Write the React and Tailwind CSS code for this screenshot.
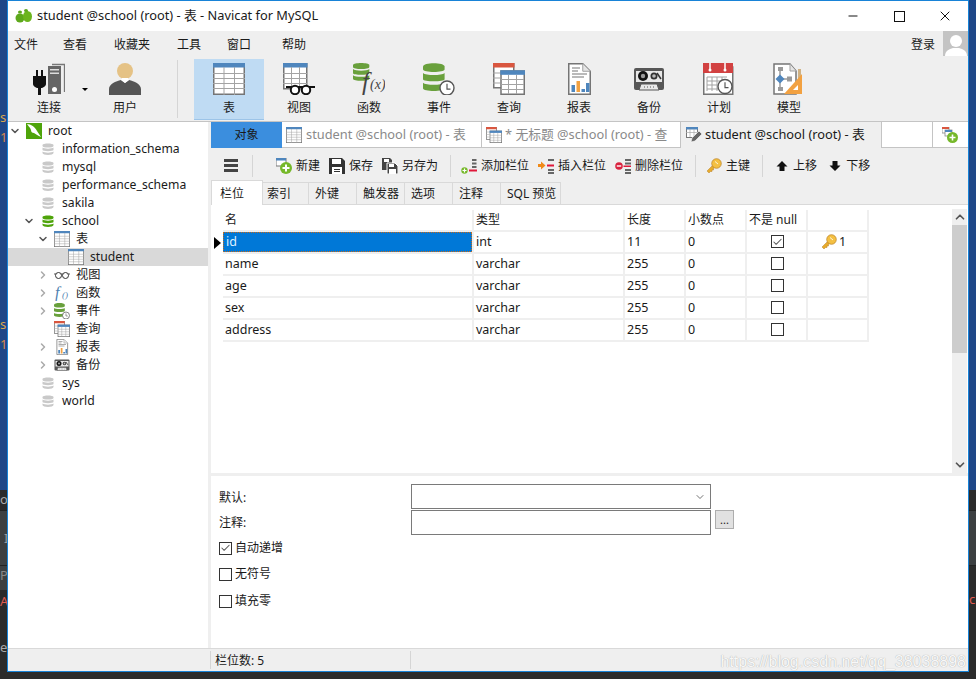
import { Minus, X, ChevronDown, ChevronRight, ChevronUp, Check } from 'lucide-react';

const font = "[font-family:'Noto_Sans','Noto_Sans_CJK_SC',sans-serif]";

function TableIcon({ className, head = '#4f86bd' }) {
  return (
    <svg viewBox="0 0 32 32" className={className}>
      <rect x="0.75" y="0.75" width="30.5" height="30.5" fill="#fff" stroke="#757575" strokeWidth="1.5" />
      <rect x="0" y="0" width="32" height="4.5" fill={head} />
      <path d="M0 10.5H32M0 15.5H32M0 20.5H32M0 25.5H32M11 4V32M21.5 4V32" stroke="#a3a3a3" strokeWidth="1" />
    </svg>
  );
}

function Db({ className, color = '#69a03c' }) {
  return (
    <svg viewBox="0 0 24 24" className={className}>
      <path d="M1 4c0-4 22-4 22 0v2c0 4-22 4-22 0z" fill={color} />
      <path d="M1 9c3 3 19 3 22 0v5c0 3-22 3-22 0z" fill={color} />
      <path d="M1 17c3 3 19 3 22 0v3c0 5-22 5-22 0z" fill={color} />
    </svg>
  );
}

function Clock({ cx, cy, r }) {
  return (
    <g>
      <circle cx={cx} cy={cy} r={r} fill="#fff" stroke="#555" strokeWidth={r / 5} />
      <path d={`M${cx} ${cy - r * 0.6}V${cy + r * 0.15}H${cx + r * 0.5}`} fill="none" stroke="#555" strokeWidth={r / 6} />
    </g>
  );
}

function PlugIcon() {
  return (
    <svg viewBox="0 0 32 32" className="h-8 w-8">
      <path d="M3 7h2v6H3zM8 7h2v6H8z" fill="#111" />
      <path d="M0 13h13v8c0 2-3 4-5 4v7H5v-7c-2 0-5-2-5-4z" fill="#111" />
      <path d="M15 3h13v28H15z" fill="#666" />
      <path d="M17 6h9v1.5h-9zM17 9.500h9V11h-9z" fill="#ddd" />
      <circle cx="21.500" cy="26.500" r="2.500" fill="#fff" />
      <path d="M19 1.500h12.500V29" fill="none" stroke="#777" strokeWidth="1.300" />
    </svg>
  );
}

function UserIcon() {
  return (
    <svg viewBox="0 0 32 32" className="h-8 w-8">
      <circle cx="16" cy="8" r="8" fill="#e5c285" />
      <path d="M0 32v-6c0-5 7-8 12-9l4 3 4-3c5 1 12 4 12 9v6z" fill="#555" />
      <path d="M12 17l4 3 4-3-1-2h-6z" fill="#fff" />
    </svg>
  );
}

function ViewIcon({ className = 'h-8 w-8', small }) {
  if (small) {
    return (
      <svg viewBox="0 0 16 16" className={className}>
        <path d="M0 7h16" stroke="#333" strokeWidth="0.800" />
        <circle cx="4.500" cy="8.500" r="3" fill="#fff" stroke="#333" strokeWidth="1" />
        <circle cx="11.500" cy="8.500" r="3" fill="#fff" stroke="#333" strokeWidth="1" />
      </svg>
    );
  }
  return (
    <svg viewBox="0 0 32 32" className={className}>
      <rect x="0.750" y="0.750" width="23" height="25" fill="#fff" stroke="#757575" strokeWidth="1.500" />
      <rect x="0" y="0" width="24.500" height="4.500" fill="#4f86bd" />
      <path d="M0 10.500H24M0 15.500H24M0 20.500H24M8.500 4V26M16.500 4V26" stroke="#a3a3a3" />
      <path d="M3 24h29" stroke="#111" strokeWidth="2" />
      <circle cx="12" cy="27" r="4.200" fill="#fff" stroke="#111" strokeWidth="2" />
      <circle cx="23" cy="27" r="4.200" fill="#fff" stroke="#111" strokeWidth="2" />
    </svg>
  );
}

function FuncIcon() {
  return (
    <svg viewBox="0 0 32 32" className="h-8 w-8">
      <g transform="scale(0.68)">
        <path d="M0 3c0-4 24-4 24 0v3c0 4-24 4-24 0z" fill="#69a03c" />
        <path d="M0 9c3 3 21 3 24 0v6c0 3-24 3-24 0z" fill="#69a03c" />
        <path d="M0 18c3 3 21 3 24 0v5c0 4-24 4-24 0z" fill="#69a03c" />
      </g>
      <text x="9" y="27" fontFamily="Liberation Serif" fontStyle="italic" fontSize="25" fill="#444">f</text>
      <text x="17" y="26" fontFamily="Liberation Serif" fontStyle="italic" fontSize="14" fill="#444">(x)</text>
    </svg>
  );
}

function EventIcon({ className = 'h-8 w-8' }) {
  return (
    <svg viewBox="0 0 32 32" className={className}>
      <g transform="scale(0.9)">
        <path d="M0 4c0-5 24-5 24 0v3c0 4-24 4-24 0z" fill="#69a03c" />
        <path d="M0 11c3 3 21 3 24 0v7c0 3-24 3-24 0z" fill="#69a03c" />
        <path d="M0 22c3 3 21 3 24 0v6c0 4-24 4-24 0z" fill="#69a03c" />
      </g>
      <Clock cx={24} cy={25} r={7} />
    </svg>
  );
}

function QueryIcon({ className = 'h-8 w-8' }) {
  return (
    <svg viewBox="0 0 32 32" className={className}>
      <rect x="0.750" y="0.750" width="20" height="24" fill="#fff" stroke="#757575" strokeWidth="1.500" />
      <rect x="0" y="0" width="21.500" height="4.500" fill="#d9563f" />
      <path d="M0 10H7M0 15H7M0 20H7" stroke="#a3a3a3" />
      <rect x="8" y="8" width="23.250" height="23.250" fill="#fff" stroke="#757575" strokeWidth="1.500" />
      <rect x="7.300" y="7.300" width="24.700" height="4.500" fill="#4f86bd" />
      <path d="M8 16.500H31M8 21.500H31M8 26.500H31M15.500 12V31M23.500 12V31" stroke="#a3a3a3" />
    </svg>
  );
}

function ReportIcon({ className = 'h-8 w-8' }) {
  return (
    <svg viewBox="0 0 32 32" className={className}>
      <path d="M5.750 0.750h14l7.500 7.500v23H5.750z" fill="#fff" stroke="#757575" strokeWidth="1.500" />
      <path d="M19.750 0.750v7.500h7.500" fill="#e5e5e5" stroke="#a0a0a0" />
      <path d="M9 5h8M9 8h6M9 11h15M9 14h12" stroke="#777" strokeWidth="1.200" />
      <rect x="8.500" y="22" width="3.500" height="7" fill="#4f86bd" />
      <rect x="13.500" y="18" width="3.500" height="11" fill="#f2a141" />
      <rect x="18.500" y="26" width="3.500" height="3" fill="#4f86bd" />
      <rect x="23" y="20" width="3.500" height="9" fill="#4f86bd" />
    </svg>
  );
}

function BackupIcon({ className = 'h-8 w-8' }) {
  return (
    <svg viewBox="0 0 32 32" className={className}>
      <rect x="1" y="5" width="30" height="22" rx="2" fill="#575757" />
      <rect x="3" y="8" width="26" height="11" fill="#e8e8e8" />
      <circle cx="10" cy="13" r="5" fill="#111" />
      <circle cx="10" cy="13" r="2.200" fill="#999" />
      <circle cx="21" cy="13" r="3.500" fill="#333" />
      <circle cx="21" cy="13" r="1.800" fill="#bbb" />
      <path d="M24 10l4 6" stroke="#333" strokeWidth="1.500" />
      <path d="M6 27l2-6h16l2 6z" fill="#e8e8e8" stroke="#575757" />
      <path d="M11 24h1M14 24h1M17 24h1M20 24h1" stroke="#555" />
    </svg>
  );
}

function ScheduleIcon() {
  return (
    <svg viewBox="0 0 32 32" className="h-8 w-8">
      <rect x="0.750" y="4" width="29" height="27.250" fill="#fff" stroke="#757575" strokeWidth="1.500" />
      <rect x="0" y="0" width="30" height="10" fill="#d24141" />
      <path d="M7 0v6M22 0v6" stroke="#fff" strokeWidth="1.500" />
      <circle cx="7" cy="7" r="1.500" fill="#fff" />
      <circle cx="22" cy="7" r="1.500" fill="#fff" />
      <path d="M4 14h20M4 18h20M4 22h20M4 26h14M4 14v14M9 14v14M14 14v14M19 14v12" stroke="#a3a3a3" fill="none" />
      <Clock cx={22} cy={23.500} r={7} />
    </svg>
  );
}

function ModelIcon() {
  return (
    <svg viewBox="0 0 32 32" className="h-8 w-8">
      <path d="M1 1h16l6 7v23H1z" fill="#fff" stroke="#757575" strokeWidth="1.500" />
      <path d="M17 1v7h6" fill="#e5e5e5" stroke="#a0a0a0" />
      <path d="M25 6h3v25h-3z" fill="#cfb183" />
      <path d="M29 11v20H11z" fill="#f2a141" />
      <path d="M25 22v5h-5z" fill="#fff" />
      <path d="M7 8v19M7 16h10" stroke="#9a9a9a" strokeWidth="1.500" />
      <rect x="5" y="4" width="5" height="4" fill="#9a9a9a" />
      <rect x="14" y="13.500" width="5" height="5" fill="#9a9a9a" />
      <rect x="5" y="24" width="5" height="4" fill="#9a9a9a" />
      <path d="M7 11.500l4.500 4.500-4.500 4.500-4.500-4.500z" fill="#4f86bd" />
    </svg>
  );
}

function MysqlIcon() {
  return (
    <svg viewBox="0 0 16 16" className="h-4 w-4">
      <rect width="16" height="16" fill="#4ea40a" />
      <path d="M1 1c4 0 8 3 10 7l4 6c-3-1-5-3-7-4-2 0-3-1-3-3C4 4 2 3 1 1z" fill="#fff" />
    </svg>
  );
}

function FnSmall() {
  return (
    <svg viewBox="0 0 16 16" className="h-4 w-4">
      <text x="1" y="13" fontFamily="Liberation Serif" fontStyle="italic" fontSize="16" fill="#4f7fb0">f</text>
      <text x="8" y="13" fontFamily="Liberation Serif" fontStyle="italic" fontSize="9" fill="#4f7fb0">()</text>
    </svg>
  );
}

function KeyIcon({ className = 'h-4 w-4' }) {
  return (
    <svg viewBox="0 0 16 16" className={className}>
      <path d="M1 13l6-6 2 2-1.500 1.500v1.500H6v1.500H4.500L3 15z" fill="#e7ab2c" stroke="#b9812a" strokeWidth="0.500" />
      <circle cx="10.500" cy="5.500" r="4.800" fill="#f4c042" stroke="#b9812a" strokeWidth="0.700" />
      <path d="M9 3.500l3 2.500" stroke="#fff" strokeWidth="0.800" />
    </svg>
  );
}

function NewIcon() {
  return (
    <svg viewBox="0 0 16 16" className="h-4 w-4">
      <rect x="0" y="0" width="10" height="8" fill="#fff" stroke="#777" />
      <rect x="0" y="0" width="10" height="2.500" fill="#4f86bd" />
      <circle cx="10" cy="10" r="6" fill="#76b82a" />
      <path d="M10 6.500v7M6.500 10h7" stroke="#fff" strokeWidth="2" />
    </svg>
  );
}

function SaveIcon() {
  return (
    <svg viewBox="0 0 16 16" className="h-4 w-4">
      <path d="M0 0h13l3 3v13H0z" fill="#333" />
      <rect x="3" y="1" width="9" height="5" fill="#fff" />
      <rect x="3" y="9" width="10" height="7" fill="#fff" />
      <path d="M5 11.500h6M5 13.500h6" stroke="#333" />
    </svg>
  );
}

function SaveAsIcon() {
  return (
    <svg viewBox="0 0 16 16" className="h-4 w-4">
      <path d="M0 0h8l2 2v10H0z" fill="#444" />
      <rect x="2" y="1" width="5" height="3" fill="#fff" />
      <path d="M5 5h8l3 3v8H5z" fill="#444" stroke="#fff" />
      <rect x="7" y="6" width="5" height="3" fill="#fff" />
      <rect x="7" y="11" width="7" height="5" fill="#fff" />
    </svg>
  );
}

function AddFieldIcon() {
  return (
    <svg viewBox="0 0 16 16" className="h-4 w-4">
      <path d="M11 1h4.500v2H11zM11 4.500h4.500v2H11zM11 8h4.500v2H11z" fill="#666" />
      <rect x="8" y="11.500" width="8" height="2" fill="#e0183a" />
      <circle cx="3.500" cy="12.500" r="3.200" fill="#76b82a" />
      <path d="M3.500 10.500v4M1.500 12.500h4" stroke="#fff" strokeWidth="1.200" />
    </svg>
  );
}

function InsertFieldIcon() {
  return (
    <svg viewBox="0 0 16 16" className="h-4 w-4">
      <path d="M10 1h6v2h-6zM10 11h6v2h-6zM10 14h6v2h-6z" fill="#666" />
      <rect x="9" y="6.500" width="7" height="2" fill="#e0183a" />
      <path d="M0 6h3V3.500l4.500 4-4.500 4V9H0z" fill="#f08a18" />
    </svg>
  );
}

function DeleteFieldIcon() {
  return (
    <svg viewBox="0 0 16 16" className="h-4 w-4">
      <path d="M10 1h6v2h-6zM10 4.500h6v2h-6zM10 11h6v2h-6zM10 14h6v2h-6z" fill="#666" />
      <circle cx="4" cy="8" r="3.800" fill="#d9233f" />
      <path d="M1.800 8h4.400" stroke="#fff" strokeWidth="1.400" />
      <rect x="8.500" y="7.500" width="7.500" height="1.500" fill="#e0183a" />
    </svg>
  );
}

function EditTabIcon() {
  return (
    <svg viewBox="0 0 16 16" className="h-4 w-4">
      <rect x="0.500" y="0.500" width="11" height="10" fill="#fff" stroke="#777" />
      <rect x="0" y="0" width="12" height="2.500" fill="#4f86bd" />
      <path d="M0 5.500h11M4 2v8M8 2v8" stroke="#aaa" strokeWidth="0.700" />
      <path d="M5 15l1-4 7-7 3 3-7 7z" fill="#666" stroke="#fff" strokeWidth="0.600" />
    </svg>
  );
}

function AddTabIcon() {
  return (
    <svg viewBox="0 0 16 16" className="h-4 w-4">
      <rect x="0" y="0" width="7" height="6" fill="#fff" stroke="#888" strokeWidth="0.800" />
      <rect x="0" y="0" width="7" height="2" fill="#d9563f" />
      <rect x="3" y="3" width="7" height="6" fill="#fff" stroke="#888" strokeWidth="0.800" />
      <rect x="3" y="3" width="7" height="2" fill="#4f86bd" />
      <circle cx="10.500" cy="10.500" r="5.500" fill="#76b82a" />
      <path d="M10.500 7.500v6M7.500 10.500h6" stroke="#fff" strokeWidth="1.600" />
    </svg>
  );
}

function MoveIcon({ down }) {
  return (
    <svg viewBox="0 0 14 14" className={`h-[14px] w-[14px] ${down ? 'rotate-180' : ''}`}>
      <path d="M7 2L12.500 7.500H9.500V12H4.500V7.500H1.500Z" fill="#111" />
    </svg>
  );
}

const tools = [
  { label: '连接', icon: <PlugIcon />, cls: 'ml-[6px] w-[70px]' },
  { label: '用户', icon: <UserIcon />, cls: 'ml-[6px] w-[70px]' },
  { label: '表', icon: <TableIcon className="h-8 w-8" />, cls: 'w-[70px] bg-[#bfdbf3] border-b border-[#9cc4e8]' },
  { label: '视图', icon: <ViewIcon />, cls: 'w-[70px]' },
  { label: '函数', icon: <FuncIcon />, cls: 'w-[70px]' },
  { label: '事件', icon: <EventIcon />, cls: 'w-[70px]' },
  { label: '查询', icon: <QueryIcon />, cls: 'w-[70px]' },
  { label: '报表', icon: <ReportIcon />, cls: 'w-[70px]' },
  { label: '备份', icon: <BackupIcon />, cls: 'w-[70px]' },
  { label: '计划', icon: <ScheduleIcon />, cls: 'w-[70px]' },
  { label: '模型', icon: <ModelIcon />, cls: 'w-[70px]' },
];

const tree = [
  { label: 'root', pl: 'pl-px', chev: 'down', icon: <MysqlIcon /> },
  { label: 'information_schema', pl: 'pl-[15px]', icon: <Db className="h-3 w-3" color="#c9c9c9" /> },
  { label: 'mysql', pl: 'pl-[15px]', icon: <Db className="h-3 w-3" color="#c9c9c9" /> },
  { label: 'performance_schema', pl: 'pl-[15px]', icon: <Db className="h-3 w-3" color="#c9c9c9" /> },
  { label: 'sakila', pl: 'pl-[15px]', icon: <Db className="h-3 w-3" color="#c9c9c9" /> },
  { label: 'school', pl: 'pl-[15px]', chev: 'down', icon: <Db className="h-3 w-3" color="#4ea40a" /> },
  { label: '表', pl: 'pl-[29px]', chev: 'down', icon: <TableIcon className="h-4 w-4" /> },
  { label: 'student', pl: 'pl-[43px]', icon: <TableIcon className="h-4 w-4" />, selected: true },
  { label: '视图', pl: 'pl-[29px]', chev: 'right', icon: <ViewIcon small className="h-4 w-4" /> },
  { label: '函数', pl: 'pl-[29px]', chev: 'right', icon: <FnSmall /> },
  { label: '事件', pl: 'pl-[29px]', chev: 'right', icon: <EventIcon className="h-4 w-4" /> },
  { label: '查询', pl: 'pl-[29px]', icon: <QueryIcon className="h-4 w-4" /> },
  { label: '报表', pl: 'pl-[29px]', chev: 'right', icon: <ReportIcon className="h-4 w-4" /> },
  { label: '备份', pl: 'pl-[29px]', chev: 'right', icon: <BackupIcon className="h-4 w-4" /> },
  { label: 'sys', pl: 'pl-[15px]', icon: <Db className="h-3 w-3" color="#c9c9c9" /> },
  { label: 'world', pl: 'pl-[15px]', icon: <Db className="h-3 w-3" color="#c9c9c9" /> },
];

const actions = [
  { label: '新建', icon: <NewIcon />, cls: 'ml-[23px]' },
  { label: '保存', icon: <SaveIcon />, cls: 'ml-[9px]' },
  { label: '另存为', icon: <SaveAsIcon />, cls: 'ml-[9px]' },
  { sep: true, cls: 'ml-[12px]' },
  { label: '添加栏位', icon: <AddFieldIcon />, cls: 'ml-[10px]' },
  { label: '插入栏位', icon: <InsertFieldIcon />, cls: 'ml-[9px]' },
  { label: '删除栏位', icon: <DeleteFieldIcon />, cls: 'ml-[9px]' },
  { sep: true, cls: 'ml-[12px]' },
  { label: '主键', icon: <KeyIcon />, cls: 'ml-[10px]' },
  { sep: true, cls: 'ml-[12px]' },
  { label: '上移', icon: <MoveIcon />, cls: 'ml-[12px]' },
  { label: '下移', icon: <MoveIcon down />, cls: 'ml-[11px]' },
];

const subTabs = [
  { label: '索引', cls: 'w-[46px] pl-[4px]' },
  { label: '外键', cls: 'w-[48px] pl-[6px]' },
  { label: '触发器', cls: 'w-[48px] pl-[6px]' },
  { label: '选项', cls: 'w-[48px] pl-[6px]' },
  { label: '注释', cls: 'w-[48px] pl-[6px]' },
  { label: 'SQL 预览', cls: 'w-[60px] pl-[6px]' },
];

const fields = [
  { name: 'id', type: 'int', len: '11', notNull: true, pk: true },
  { name: 'name', type: 'varchar', len: '255' },
  { name: 'age', type: 'varchar', len: '255' },
  { name: 'sex', type: 'varchar', len: '255' },
  { name: 'address', type: 'varchar', len: '255' },
];

const cell = 'flex items-center border-r-2 border-b-2 border-[#efefef] pl-[2px]';

function Box({ checked }) {
  return (
    <span className="flex h-[13px] w-[13px] items-center justify-center border border-[#333] bg-white">
      {checked && <Check size={12} strokeWidth={2.200} color="#555" />}
    </span>
  );
}

function TreeRow({ row }) {
  return (
    <div className={`flex h-[18px] items-center ${row.pl} ${row.selected ? 'bg-[#d9d9d9]' : ''}`}>
      <span className="flex w-[12px] justify-center">
        {row.chev === 'down' && <ChevronDown size={12} strokeWidth={3} color="#555" />}
        {row.chev === 'right' && <ChevronRight size={12} strokeWidth={3} color="#aaa" />}
      </span>
      <span className="ml-[5px] mr-[6px] flex h-4 w-4 shrink-0 items-center justify-center">{row.icon}</span>
      <span className="whitespace-nowrap">{row.label}</span>
    </div>
  );
}

function FieldRow({ f }) {
  return (
    <div className="flex h-[22px] text-[12.5px]">
      <div className="flex w-[12px] items-center justify-end pr-[2px]">
        {f.pk && <span className="h-0 w-0 border-y-[6px] border-l-[7px] border-y-transparent border-l-black" />}
      </div>
      {f.pk ? (
        <div className="flex w-[251px] items-center border-b-2 border-r-2 border-[#efefef]">
          <div className="flex h-[20px] w-[249px] items-center border border-dotted border-[#c86a1a] bg-[#0078d7] pl-[2px] text-[#dfefff]">{f.name}</div>
        </div>
      ) : (
        <div className={`${cell} w-[251px]`}>{f.name}</div>
      )}
      <div className={`${cell} w-[151px]`}>{f.type}</div>
      <div className={`${cell} w-[61px]`}>{f.len}</div>
      <div className={`${cell} w-[61px]`}>0</div>
      <div className={`${cell} w-[61px] justify-center pb-px pl-0`}><Box checked={f.notNull} /></div>
      <div className={`${cell} w-[61px] pl-[13px]`}>
        {f.pk && <KeyIcon />}
        {f.pk && <span className="ml-[2px]">1</span>}
      </div>
    </div>
  );
}

export default function App() {
  return (
    <div className={`flex h-[679px] w-[976px] flex-col overflow-hidden bg-[#2b2b2b] text-[12px] text-[#1a1a1a] ${font}`}>
      <div className="flex h-[672px]">
        {/* editor behind the window, left */}
        <div className="flex w-[7px] shrink-0 flex-col overflow-hidden text-[13px] leading-[18px]">
          <div className="h-[490px] bg-[#1f4788] pt-[108px] text-[#d9a84e]">
            <div>s</div>
            <div className="mt-[2px] text-[#d98a4e]">1</div>
            <div className="mt-[169px]">s</div>
            <div className="mt-[2px] text-[#d98a4e]">1</div>
          </div>
          <div className="h-[20px] bg-[#2b2b2b] text-[#aaa]">o</div>
          <div className="h-[56px] border-y border-[#222] bg-[#3c3f41] pt-[18px] pl-[4px] text-[#999]">I</div>
          <div className="h-[24px] bg-[#3c3f41] text-[#888]">P</div>
          <div className="h-[82px] bg-[#2b2b2b] pt-[2px] text-[#e05a50]">
            A
            <div className="mt-[28px] text-[#aaa]">e</div>
          </div>
        </div>

        <div className="flex w-[962px] flex-col border border-[#1883d7] bg-white">
          {/* title bar */}
          <div className="flex h-[30px] shrink-0 items-center pl-[7px] text-[12.8px]">
            <svg viewBox="0 0 18 14" className="h-[14px] w-[18px]">
              <ellipse cx="5" cy="9" rx="4.500" ry="4.500" fill="#5da81c" />
              <ellipse cx="12.500" cy="7.500" rx="4.500" ry="5.500" fill="#6cb51e" />
              <ellipse cx="5" cy="3" rx="2" ry="1.500" fill="#5da81c" />
              <ellipse cx="11" cy="1.500" rx="2" ry="1.500" fill="#5da81c" />
            </svg>
            <span className="ml-[4px] whitespace-nowrap">student @school (root) - 表 - Navicat for MySQL</span>
            <div className="ml-auto flex items-center">
              <Minus size={14} strokeWidth={1.700} color="#111" />
              <span className="ml-[34px] h-[11px] w-[11px] border border-[#111]" />
              <X size={16} strokeWidth={1.500} color="#111" className="ml-[32px] mr-[15px]" />
            </div>
          </div>

          {/* menu bar */}
          <div className="flex h-[28px] shrink-0 items-center bg-[#efefef] pl-[6px]">
            <span className="w-[49px]">文件</span>
            <span className="w-[51px]">查看</span>
            <span className="w-[63px]">收藏夹</span>
            <span className="w-[50px]">工具</span>
            <span className="w-[55px]">窗口</span>
            <span>帮助</span>
            <span className="ml-auto mr-[8px]">登录</span>
            <div className="flex h-[25px] w-[25px] items-end justify-center self-start overflow-hidden bg-[#c4c4c4]">
              <svg viewBox="0 0 25 25" className="h-[25px] w-[25px]">
                <circle cx="13" cy="10" r="6" fill="#fff" />
                <path d="M2 25c0-5 4-7 8-8h6c4 1 8 3 8 8z" fill="#fff" />
              </svg>
            </div>
          </div>

          {/* main toolbar */}
          <div className="flex h-[63px] shrink-0 border-b border-[#c4c4c4] bg-[#efefef]">
            {tools.slice(0, 2).map((t, i) => (
              <div key={t.label} className={`relative flex h-[61px] flex-col items-center pt-[4px] ${t.cls}`}>
                {t.icon}
                <span className="mt-[4px]">{t.label}</span>
                {i === 0 && <span className="absolute right-[-4px] top-[29px] h-0 w-0 border-x-[3px] border-t-[3px] border-x-transparent border-t-black" />}
              </div>
            ))}
            <div className="ml-[17px] mr-[16px] mt-[1px] h-[58px] w-px bg-[#d5d5d5]" />
            {tools.slice(2).map((t) => (
              <div key={t.label} className={`flex h-[61px] flex-col items-center pt-[4px] ${t.cls}`}>
                {t.icon}
                <span className="mt-[4px]">{t.label}</span>
              </div>
            ))}
          </div>

          <div className="flex min-h-0 flex-1">
            {/* connection tree */}
            <div className="w-[200px] shrink-0 text-[12.2px]">
              {tree.map((row) => <TreeRow key={row.label} row={row} />)}
            </div>
            <div className="w-[3px] shrink-0 bg-[#efefef]" />

            <div className="flex min-w-0 flex-1 flex-col">
              {/* object tabs */}
              <div className="flex h-[26px] shrink-0 bg-[#efefef] text-[12.8px]">
                <div className="flex w-[71px] items-center justify-center border-b border-[#3b8ede] bg-[#3b8ede] pt-px text-[12px]">对象</div>
                <div className="flex w-[199px] items-center overflow-hidden whitespace-nowrap border-b border-[#c4c4c4] bg-white pl-[4px] pt-px text-[#8a8a8a]">
                  <TableIcon className="mr-[4px] h-4 w-4" />student @school (root) - 表
                </div>
                <div className="flex w-[200px] items-center overflow-hidden whitespace-nowrap border-x border-b border-[#c4c4c4] bg-white pl-[4px] pt-px text-[#8a8a8a]">
                  <QueryIcon className="mr-[3px] h-4 w-4" />* 无标题 @school (root) - 查
                </div>
                <div className="flex w-[200px] items-center overflow-hidden whitespace-nowrap pl-[5px]">
                  <EditTabIcon />
                  <span className="ml-[3px]">student @school (root) - 表</span>
                </div>
                <div className="w-[52px] border-x border-b border-[#c4c4c4] bg-white" />
                <div className="flex flex-1 items-center border-b border-[#c4c4c4] bg-white pl-[9px]"><AddTabIcon /></div>
              </div>

              {/* table design toolbar */}
              <div className="flex h-[32px] shrink-0 items-center bg-[#efefef] pt-[3px]">
                <div className="ml-[13px] flex w-[14px] flex-col gap-[2px]">
                  <span className="h-[3px] bg-[#444]" />
                  <span className="h-[3px] bg-[#444]" />
                  <span className="h-[3px] bg-[#444]" />
                </div>
                <span className="ml-[14px] h-[22px] w-px bg-[#d5d5d5]" />
                {actions.map((a, i) => (a.sep ? (
                  <span key={i} className={`h-[22px] w-px bg-[#d5d5d5] ${a.cls}`} />
                ) : (
                  <div key={a.label} className={`flex items-center gap-[4px] whitespace-nowrap ${a.cls}`}>
                    {a.icon}
                    <span>{a.label}</span>
                  </div>
                )))}
              </div>

              {/* field tabs */}
              <div className="flex h-[25px] shrink-0 items-end border-b border-[#d9d9d9] bg-[#efefef]">
                <div className="relative top-px flex h-[25px] w-[52px] items-center border-x border-t border-[#d9d9d9] bg-white pl-[8px] pt-px">栏位</div>
                {subTabs.map((t) => (
                  <div key={t.label} className={`flex h-[22px] items-center whitespace-nowrap border-r border-t border-[#d9d9d9] pt-px ${t.cls}`}>{t.label}</div>
                ))}
              </div>

              {/* field grid */}
              <div className="flex min-h-0 flex-1 bg-white">
                <div className="flex-1 pt-[5px]">
                  <div className="flex h-[22px]">
                    <div className="w-[12px]" />
                    <div className={`${cell} w-[251px]`}>名</div>
                    <div className={`${cell} w-[151px]`}>类型</div>
                    <div className={`${cell} w-[61px]`}>长度</div>
                    <div className={`${cell} w-[61px]`}>小数点</div>
                    <div className={`${cell} w-[61px]`}>不是 null</div>
                    <div className={`${cell} w-[61px]`} />
                  </div>
                  {fields.map((f) => <FieldRow key={f.name} f={f} />)}
                </div>
                <div className="mt-[4px] flex w-[15px] flex-col items-center bg-[#efefef]">
                  <ChevronUp size={14} strokeWidth={3} color="#555" className="my-[1px]" />
                  <div className="h-[128px] w-full bg-[#cdcdcd]" />
                  <ChevronDown size={14} strokeWidth={3} color="#555" className="mb-[1px] mt-auto" />
                </div>
                <div className="w-px" />
              </div>

              {/* field options */}
              <div className="h-[175px] shrink-0 border-t-[3px] border-[#efefef] bg-white pl-[8px] pt-[8px]">
                <div className="flex h-[25px] items-center">
                  <span className="w-[192px] pt-[2px]">默认:</span>
                  <div className="flex h-[25px] w-[300px] items-center justify-end border border-[#7a7a7a] pr-[4px]">
                    <ChevronDown size={12} strokeWidth={1.500} color="#444" />
                  </div>
                </div>
                <div className="mt-px flex h-[25px] items-center">
                  <span className="w-[192px] pt-px">注释:</span>
                  <div className="h-[25px] w-[300px] border border-[#7a7a7a]" />
                  <div className="ml-[4px] flex h-[19px] w-[19px] items-center justify-center self-start border border-[#adadad] bg-[#e1e1e1] text-[11px] leading-none">...</div>
                </div>
                <div className="flex h-[26px] items-center gap-[3px]"><Box checked /><span>自动递增</span></div>
                <div className="flex h-[26px] items-center gap-[3px]"><Box /><span>无符号</span></div>
                <div className="mt-px flex h-[26px] items-center gap-[3px]"><Box /><span>填充零</span></div>
              </div>
            </div>
          </div>

          {/* status bar */}
          <div className="relative flex h-[23px] shrink-0 items-center border-t border-[#d9d9d9] bg-[#efefef]">
            <span className="ml-[202px] h-[18px] w-px bg-[#d5d5d5]" />
            <span className="ml-[4px] w-[195px] pt-px">栏位数: 5</span>
            <span className="h-[18px] w-px bg-[#d5d5d5]" />
            <span className="absolute right-[2px] top-[1px] whitespace-nowrap text-[16px] text-[#f8f8f8] [font-family:'Liberation_Sans',sans-serif] [text-shadow:0_0_1px_#999]">https://blog.csdn.net/qq_38038898</span>
          </div>
        </div>

        {/* editor behind the window, right */}
        <div className="flex w-[7px] shrink-0 flex-col overflow-hidden text-[13px] leading-[18px]">
          <div className="h-[490px] bg-[#1f4788]" />
          <div className="h-[20px] bg-[#2b2b2b]" />
          <div className="h-[56px] border-y border-[#222] bg-[#3c3f41]" />
          <div className="h-[24px] bg-[#2b2b2b]" />
          <div className="flex-1 bg-[#2b2b2b] text-[#e05a50]">c</div>
        </div>
      </div>
    </div>
  );
}
